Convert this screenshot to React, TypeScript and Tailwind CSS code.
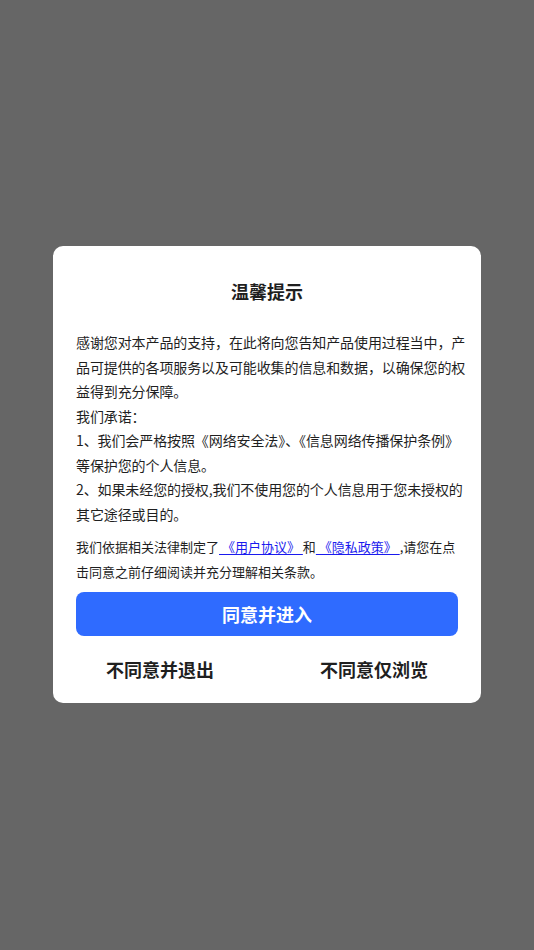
import React from 'react';

const App: React.FC = () => {
  return (
    <div
      lang="zh-CN"
      className="w-full min-h-[950px] bg-[#666666] flex items-start justify-center pt-[246px]"
      style={{ fontFamily: '"Noto Sans CJK SC", "Noto Sans", sans-serif' }}
    >
      <div className="w-[428px] bg-white rounded-[10px] pt-[33px] pb-[14px]">
        <h2 className="text-center text-[18px] leading-6 font-bold text-[#1f1f1f]">温馨提示</h2>

        <div className="px-[23px] mt-[27px] text-[14px] leading-[24.5px] text-[#1f1f1f]">
          <div className="-mr-[8px] tracking-[-0.1px]">
            <p>感谢您对本产品的支持，在此将向您告知产品使用过程当中，产品可提供的各项服务以及可能收集的信息和数据，以确保您的权益得到充分保障。</p>
            <p>我们承诺：</p>
            <p>1、我们会严格按照《网络安全法》、《信息网络传播保护条例》等保护您的个人信息。</p>
            <p>2、如果未经您的授权,我们不使用您的个人信息用于您未授权的其它途径或目的。</p>
          </div>
          <p className="mt-[8px] text-[13px] leading-[25px] tracking-normal [text-spacing-trim:space-all]">
            我们依据相关法律制定了
            <a className="text-[#1a1aee] underline underline-offset-2">&nbsp;《用户协议》&nbsp;</a>
            和
            <a className="text-[#1a1aee] underline underline-offset-2">&nbsp;《隐私政策》&nbsp;</a>
            ,请您在点击同意之前仔细阅读并充分理解相关条款。
          </p>

          <button className="mt-[8px] w-full h-[44px] rounded-[8px] bg-[#2f6bff] text-white text-[18px] font-semibold">
            同意并进入
          </button>
        </div>

        <div className="flex mt-[13px]">
          <button className="flex-1 h-10 text-[18px] font-semibold text-[#1f1f1f]">不同意并退出</button>
          <button className="flex-1 h-10 text-[18px] font-semibold text-[#1f1f1f]">不同意仅浏览</button>
        </div>
      </div>
    </div>
  );
};

export default App;
